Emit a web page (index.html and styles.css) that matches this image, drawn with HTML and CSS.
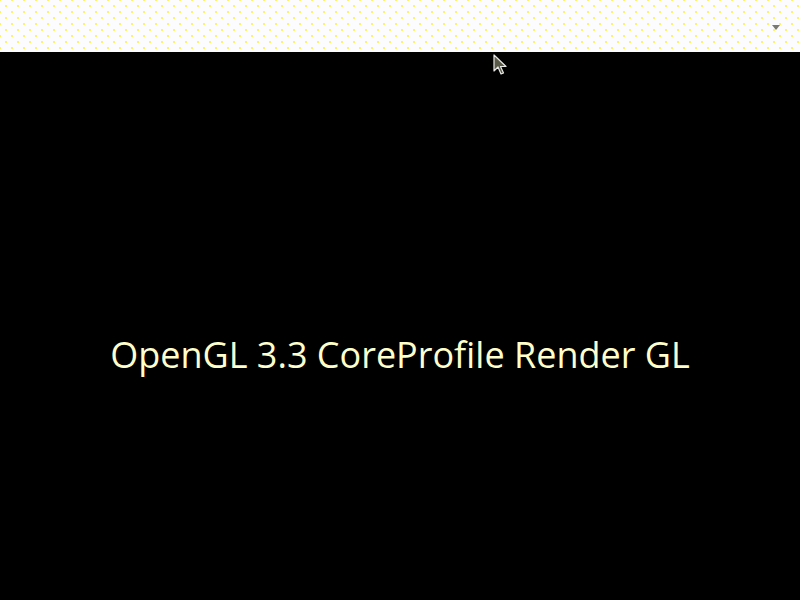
FILE: index.html
```html
<!DOCTYPE html>
<html lang="en">
<head>
  <meta charset="UTF-8" />
  <title>OpenGL 3.3 CoreProfile Render GL</title>
  <link rel="stylesheet" href="styles.css">
</head>
<body>

<header class="toolbar">
  <span class="menu-arrow"></span>
</header>

<main class="viewport">
  <p class="caption">OpenGL 3.3 CoreProfile Render GL</p>
  <svg class="cursor" width="14" height="22" viewBox="0 0 14 22">
    <path d="M1 1 L1 17 L5 13 L8 20 L10.5 19 L7.5 12.5 L13 12.5 Z" fill="#5a5a48" stroke="#e8e8e8" stroke-width="1.2" stroke-linejoin="round"/>
  </svg>
</main>

</body>
</html>
```

FILE: styles.css
```css
body {
  margin: 0;
  background: #000;
  font-family: 'Open Sans', sans-serif;
  height: 600px;
  overflow: hidden;
}
.toolbar {
  height: 52px;
  background-color: #fcfcfe;
  background-image:
    radial-gradient(circle, #fff266 0.9px, transparent 1.3px),
    radial-gradient(circle, #fff266 0.9px, transparent 1.3px);
  background-size: 12px 12px;
  background-position: 0 0, 6px 6px;
  display: flex;
  justify-content: flex-end;
  align-items: center;
  padding-right: 20px;
}
.menu-arrow {
  width: 0;
  height: 0;
  border-left: 4px solid transparent;
  border-right: 4px solid transparent;
  border-top: 5px solid #7a7a70;
  margin-top: 2px;
}
.viewport {
  position: relative;
  height: 548px;
  display: flex;
  justify-content: center;
  align-items: center;
}
.caption {
  margin: 56px 0 0;
  color: #ffffcc;
  font-size: 36px;
}
.cursor {
  position: absolute;
  left: 493px;
  top: 2px;
}
```
